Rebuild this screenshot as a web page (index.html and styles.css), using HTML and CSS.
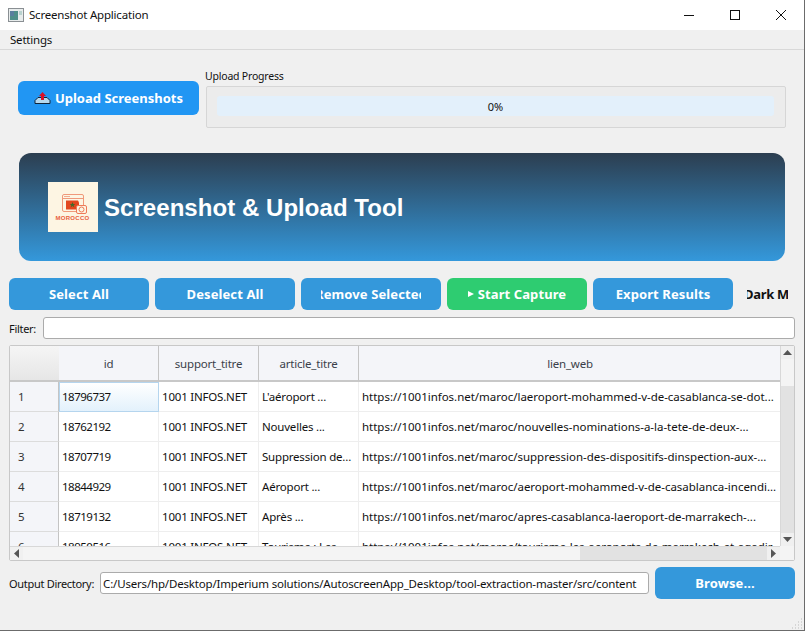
FILE: index.html
```html
<!DOCTYPE html>
<html lang="fr">
<head>
    <meta charset="UTF-8">
    <title>Screenshot Application</title>
    <link rel="stylesheet" href="styles.css">
</head>
<body>
<div class="window">

    <!-- TITLE BAR -->
    <div class="titlebar">
        <svg class="app-icon" width="16" height="14" viewBox="0 0 16 14">
            <rect x="0.5" y="0.5" width="15" height="13" fill="#e8ecec" stroke="#8a8f93"/>
            <rect x="2" y="3" width="8" height="9" fill="#4f8f8a"/>
            <rect x="2" y="3" width="4" height="5" fill="#5a7f9f"/>
            <rect x="11" y="3" width="3" height="4" fill="#b9d2cf"/>
        </svg>
        <span class="app-title">Screenshot Application</span>
        <div class="win-controls">
            <svg width="12" height="12" viewBox="0 0 12 12"><path d="M1 6.5h10" stroke="#111" fill="none"/></svg>
            <svg width="12" height="12" viewBox="0 0 12 12"><rect x="1.5" y="1.5" width="9" height="9" stroke="#111" fill="none"/></svg>
            <svg width="12" height="12" viewBox="0 0 12 12"><path d="M1 1l10 10M11 1L1 11" stroke="#111" fill="none"/></svg>
        </div>
    </div>

    <!-- MENU -->
    <div class="menubar">Settings</div>

    <div class="content">

        <!-- UPLOAD -->
        <div class="upload-row">
            <button class="btn btn-upload">
                <svg width="17" height="14" viewBox="0 0 17 14">
                    <path d="M1 9.5L4 6.5H13L16 9.5V12.5H1Z" fill="#b5d9ef" stroke="#10243a"/>
                    <path d="M8.5 1L12 5H10V9H7V5H5Z" fill="#d8112a"/>
                </svg>
                Upload Screenshots
            </button>
            <div class="progress-wrap">
                <div class="progress-label">Upload Progress</div>
                <div class="progress-box">
                    <div class="progress-bar">0%</div>
                </div>
            </div>
        </div>

        <!-- BANNER -->
        <div class="banner">
            <svg class="logo" width="50" height="50" viewBox="0 0 50 50">
                <rect width="50" height="50" fill="#fdf5e3"/>
                <rect x="14.5" y="12.5" width="21" height="17" rx="1.5" fill="#fdf5e3" stroke="#f0997a"/>
                <path d="M15 16.5h20" stroke="#f0997a"/>
                <path d="M16.5 14.5h1M18.5 14.5h1M20.5 14.5h1" stroke="#e0603c"/>
                <path d="M18 18.5h12l1 2v7H18Z" fill="#e2471f"/>
                <path d="M24.5 20l.8 2h2l-1.6 1.3.6 2-1.8-1.2-1.8 1.2.6-2-1.6-1.3h2Z" fill="#3f6b2a"/>
                <rect x="28.5" y="23.5" width="10" height="8" rx="1.5" fill="#fdf5e3" stroke="#ee7a58"/>
                <circle cx="33.5" cy="27.5" r="2.5" fill="none" stroke="#ee7a58"/>
                <text class="logo-text" x="24.5" y="37.5" text-anchor="middle">MOROCCO</text>
            </svg>
            <h1 class="banner-title">Screenshot &amp; Upload Tool</h1>
        </div>

        <!-- ACTIONS -->
        <div class="actions">
            <button class="btn btn-action">Select All</button>
            <button class="btn btn-action">Deselect All</button>
            <button class="btn btn-action"><span class="clip">Remove Selected</span></button>
            <button class="btn btn-action btn-green">
                <svg width="6" height="6" viewBox="0 0 6 6"><path d="M0 0L6 3L0 6Z" fill="#fff"/></svg>
                Start Capture
            </button>
            <button class="btn btn-action">Export Results</button>
            <span class="dark-toggle"><span class="clip">Dark Mode</span></span>
        </div>

        <!-- FILTER -->
        <div class="filter-row">
            <label class="field-label">Filter:</label>
            <input type="text" class="field">
        </div>

        <!-- TABLE -->
        <div class="table-frame">
            <div class="table-view">
                <table class="grid">
                    <colgroup>
                        <col class="col-head"><col class="col-std"><col class="col-std"><col class="col-std"><col>
                    </colgroup>
                    <thead>
                        <tr>
                            <th class="corner"></th>
                            <th>id</th>
                            <th>support_titre</th>
                            <th>article_titre</th>
                            <th>lien_web</th>
                        </tr>
                    </thead>
                    <tbody>
                        <tr>
                            <th>1</th>
                            <td class="cell-id current">18796737</td>
                            <td>1001 INFOS.NET</td>
                            <td>L'aéroport ...</td>
                            <td class="cell-link">https://1001infos.net/maroc/laeroport-mohammed-v-de-casablanca-se-dot...</td>
                        </tr>
                        <tr>
                            <th>2</th>
                            <td class="cell-id">18762192</td>
                            <td>1001 INFOS.NET</td>
                            <td>Nouvelles ...</td>
                            <td class="cell-link">https://1001infos.net/maroc/nouvelles-nominations-a-la-tete-de-deux-...</td>
                        </tr>
                        <tr>
                            <th>3</th>
                            <td class="cell-id">18707719</td>
                            <td>1001 INFOS.NET</td>
                            <td>Suppression de...</td>
                            <td class="cell-link">https://1001infos.net/maroc/suppression-des-dispositifs-dinspection-aux-...</td>
                        </tr>
                        <tr>
                            <th>4</th>
                            <td class="cell-id">18844929</td>
                            <td>1001 INFOS.NET</td>
                            <td>Aéroport ...</td>
                            <td class="cell-link">https://1001infos.net/maroc/aeroport-mohammed-v-de-casablanca-incendi...</td>
                        </tr>
                        <tr>
                            <th>5</th>
                            <td class="cell-id">18719132</td>
                            <td>1001 INFOS.NET</td>
                            <td>Après ...</td>
                            <td class="cell-link">https://1001infos.net/maroc/apres-casablanca-laeroport-de-marrakech-...</td>
                        </tr>
                        <tr>
                            <th>6</th>
                            <td class="cell-id">18950516</td>
                            <td>1001 INFOS.NET</td>
                            <td>Tourisme : Les ...</td>
                            <td class="cell-link">https://1001infos.net/maroc/tourisme-les-aeroports-de-marrakech-et-agadir...</td>
                        </tr>
                    </tbody>
                </table>
            </div>
            <div class="vscroll">
                <div class="arrow-btn"><svg width="9" height="5" viewBox="0 0 9 5"><path d="M4.5 0L9 5H0Z" fill="#555"/></svg></div>
                <div class="vthumb"></div>
                <div class="vtrack"></div>
                <div class="arrow-btn"><svg width="9" height="5" viewBox="0 0 9 5"><path d="M0 0H9L4.5 5Z" fill="#555"/></svg></div>
            </div>
            <div class="hscroll">
                <div class="arrow-btn"><svg width="5" height="9" viewBox="0 0 5 9"><path d="M5 0V9L0 4.5Z" fill="#555"/></svg></div>
                <div class="hthumb"></div>
                <div class="htrack"></div>
                <div class="arrow-btn"><svg width="5" height="9" viewBox="0 0 5 9"><path d="M0 0L5 4.5L0 9Z" fill="#555"/></svg></div>
            </div>
            <div class="scroll-corner"></div>
        </div>

        <!-- OUTPUT -->
        <div class="output-row">
            <label class="field-label">Output Directory:</label>
            <input type="text" class="field" value="C:/Users/hp/Desktop/Imperium solutions/AutoscreenApp_Desktop/tool-extraction-master/src/content">
            <button class="btn btn-action btn-browse">Browse...</button>
        </div>
    </div>

    <svg class="grip" width="12" height="12" viewBox="0 0 12 12">
        <path d="M10 2h1M7 5h1M10 5h1M4 8h1M7 8h1M10 8h1M1 11h1M4 11h1M7 11h1M10 11h1" stroke="#bbb"/>
    </svg>
</div>
</body>
</html>
```

FILE: styles.css
```css
* {
    box-sizing: border-box;
}

html, body {
    margin: 0;
    height: 100%;
    overflow: hidden;
}

body {
    font-family: "Noto Sans", "Open Sans", sans-serif;
    font-size: 11.5px;
    letter-spacing: -0.2px;
    color: #111;
    background: #f0f0f0;
}

/* WINDOW */
.window {
    position: relative;
    width: 805px;
    height: 631px;
    display: flex;
    flex-direction: column;
    border-right: 1px solid #6b6b6b;
    border-bottom: 1px solid #6b6b6b;
}

.titlebar {
    height: 30px;
    flex: none;
    background: #fff;
    display: flex;
    align-items: center;
    padding-left: 8px;
}

.app-icon {
    margin-right: 5px;
}

.app-title {
    margin-bottom: 2px;
}

.win-controls {
    margin-left: auto;
    display: flex;
    gap: 34px;
    padding-right: 17px;
}

.menubar {
    height: 20px;
    flex: none;
    padding-left: 10px;
    line-height: 19px;
    background: #f0f0f0;
    border-bottom: 1px solid #d8d8d8;
}

.content {
    flex: 1;
    display: flex;
    flex-direction: column;
    padding: 0 9px;
}

/* BUTTONS */
.btn {
    border: none;
    color: #fff;
    font-family: inherit;
    font-weight: bold;
    font-size: 13px;
    letter-spacing: 0.1px;
    border-radius: 6px;
    display: flex;
    align-items: center;
    justify-content: center;
    gap: 4px;
    padding: 0;
}

.btn-upload {
    width: 181px;
    height: 34px;
    margin-top: 31px;
    letter-spacing: 0;
    background: #2196f3;
}

.btn-action {
    width: 140px;
    height: 32px;
    background: #3498db;
}

.btn-green {
    background: #2ecc71;
}

.clip {
    display: flex;
    justify-content: center;
    width: 100px;
    overflow: hidden;
    white-space: nowrap;
}

/* UPLOAD */
.upload-row {
    display: flex;
    padding-left: 9px;
    gap: 6px;
}

.progress-wrap {
    flex: none;
    width: 582px;
    padding-top: 20px;
}

.progress-label {
    font-size: 10.5px;
    height: 16px;
    line-height: 13px;
}

.progress-box {
    margin-left: 1px;
    width: 580px;
    height: 42px;
    background: #ececec;
    border: 1px solid #d6d6d6;
    border-radius: 2px;
    padding: 9px 11px 10px 10px;
}

.progress-bar {
    height: 20px;
    line-height: 21px;
    text-align: center;
    font-size: 11px;
    letter-spacing: 0;
    border-radius: 3px;
    background: #e3f0fb;
}

/* BANNER */
.banner {
    margin: 25px 10px 0 10px;
    height: 108px;
    border-radius: 12px;
    background: linear-gradient(#2c3e50, #3498db);
    display: flex;
    align-items: center;
    padding-left: 29px;
    gap: 6px;
}

.banner-title {
    margin: 0;
    padding-top: 2px;
    font-family: "Liberation Sans", Arial, sans-serif;
    font-size: 24px;
    font-weight: bold;
    letter-spacing: 0.05px;
    color: #fff;
}

.logo-text {
    font-family: "Liberation Sans", Arial, sans-serif;
    font-size: 6px;
    font-weight: bold;
    letter-spacing: 0.3px;
    fill: #e8603c;
}

/* ACTIONS */
.actions {
    margin-top: 17px;
    display: flex;
    gap: 6px;
    align-items: center;
}

.dark-toggle {
    margin-left: 8px;
    font-weight: bold;
    font-size: 13px;
    letter-spacing: -0.3px;
    color: #111;
}

.dark-toggle .clip {
    display: block;
    width: 41px;
    text-indent: -3px;
}

/* FILTER */
.filter-row {
    margin-top: 7px;
    display: flex;
    align-items: center;
    gap: 7px;
    height: 22px;
}

.field-label {
    font-size: 11px;
    letter-spacing: -0.3px;
    flex: none;
}

.field {
    flex: 1;
    min-width: 0;
    height: 22px;
    padding: 0 2px;
    font-family: inherit;
    font-size: 11.5px;
    letter-spacing: -0.18px;
    color: #111;
    background: #fff;
    border: 1px solid #ababab;
    border-radius: 3px;
    outline: none;
}

/* TABLE */
.table-frame {
    margin-top: 6px;
    width: 786px;
    height: 216px;
    flex: none;
    display: grid;
    grid-template-columns: 1fr 14px;
    grid-template-rows: 1fr 14px;
    background: #fff;
    border: 1px solid #c8c8c8;
    border-radius: 2px;
}

.table-view {
    overflow: hidden;
}

.grid {
    table-layout: fixed;
    width: 771px;
    border-collapse: separate;
    border-spacing: 0;
}

.col-head {
    width: 49px;
}

.col-std {
    width: 100px;
}

.grid thead th {
    height: 36px;
    font-weight: normal;
    color: #3a3f4a;
    background: #f4f5f9;
    border-right: 1px solid #c4c4c4;
    border-bottom: 2px solid #c8c8c8;
}

.grid thead th:last-child {
    border-right: none;
}

.grid thead .corner {
    background: linear-gradient(#f5f5f5, #e6e6e6);
    border-right: none;
}

.grid tbody th {
    height: 30px;
    font-weight: normal;
    text-align: left;
    padding: 0 0 1px 8px;
    color: #333;
    background: #f4f5f9;
    border-right: 1px solid #c4c4c4;
    border-bottom: 1px solid #dcdcdc;
}

.grid td {
    padding: 0 3px 1px;
    white-space: nowrap;
    overflow: hidden;
    border-right: 1px solid #eeeeee;
    border-bottom: 1px solid #eeeeee;
}

.grid td.cell-id {
    letter-spacing: -0.5px;
}

.grid td.cell-link {
    letter-spacing: -0.02px;
}

.grid td.current {
    padding: 0 3px 2px 2px;
    background: linear-gradient(#fff, #e3f1fc);
    border: 1px solid #b5d5ee;
}

/* SCROLLBARS */
.vscroll, .hscroll {
    display: flex;
    background: #f0f0f0;
}

.vscroll {
    flex-direction: column;
    border-left: 1px solid #d8d8d8;
}

.hscroll {
    border-top: 1px solid #d8d8d8;
}

.arrow-btn {
    flex: none;
    width: 100%;
    height: 13px;
    display: flex;
    align-items: center;
    justify-content: center;
}

.hscroll .arrow-btn {
    width: 13px;
    height: 100%;
}

.vthumb {
    height: 27px;
    flex: none;
    background: #f4f4f4;
}

.vtrack, .htrack {
    flex: 1;
    background: #e2e2e2;
}

.hthumb {
    width: 557px;
    flex: none;
    background: #f4f4f4;
}

.scroll-corner {
    background: #f4f4f4;
}

/* OUTPUT */
.output-row {
    margin-top: 6px;
    display: flex;
    align-items: center;
    gap: 6px;
}

.grip {
    position: absolute;
    right: 1px;
    bottom: 1px;
}
```
